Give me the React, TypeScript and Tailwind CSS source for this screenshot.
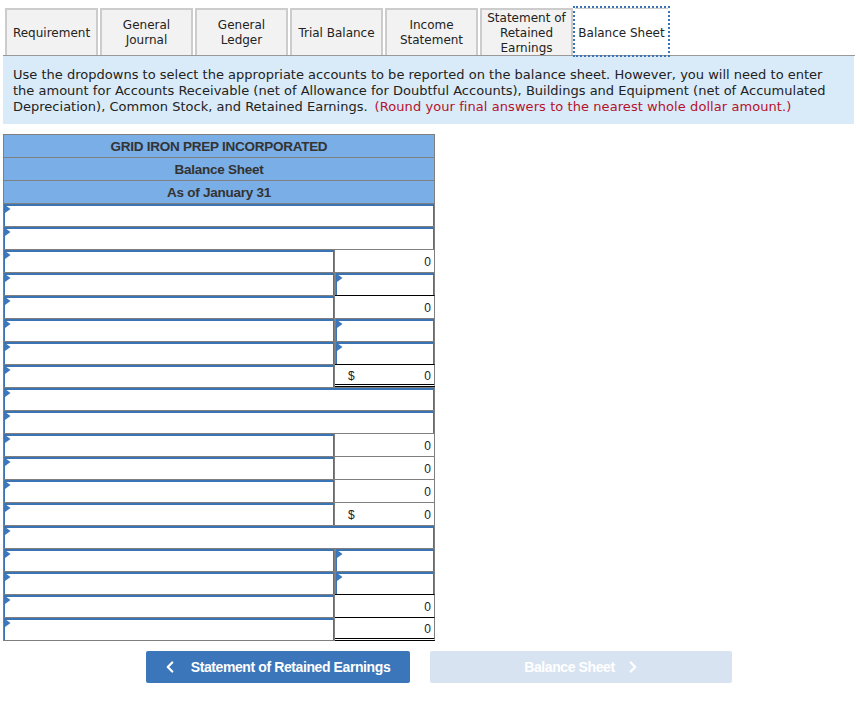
import { ChevronLeft, ChevronRight } from 'lucide-react';

const tabs = [
  { id: 'requirement', label: ['Requirement'] },
  { id: 'journal', label: ['General', 'Journal'] },
  { id: 'ledger', label: ['General', 'Ledger'] },
  { id: 'trial', label: ['Trial Balance'] },
  { id: 'income', label: ['Income', 'Statement'] },
  { id: 'retained', label: ['Statement of', 'Retained', 'Earnings'] },
  { id: 'balance', label: ['Balance Sheet'], active: true },
];

type RowType = 'full' | 'zero' | 'input' | 'total' | 'zeroRule' | 'totalPlain' | 'zeroDouble';

const rows: RowType[] = [
  'full', 'full', 'zero', 'input', 'zeroRule', 'input', 'input', 'total',
  'full', 'full', 'zero', 'zero', 'zero', 'totalPlain', 'full', 'input', 'input', 'zeroRule', 'zeroDouble',
];

function Marker() {
  return (
    <svg width="6" height="8" viewBox="0 0 6 8" className="absolute left-0 top-[-1px]">
      <path d="M0 0 L5.5 4 L0 8 Z" fill="#3b78bd" />
    </svg>
  );
}

function InputCell({ className, last }: { className: string; last?: boolean }) {
  return (
    <div
      className={`relative border-x border-t border-[#7f7f7f] bg-white ${
        last ? 'h-[24px] border-b' : 'h-[23px]'
      } ${className}`}
    >
      <div className="relative h-full border-x border-t-2 border-[#3b74b4]">
        <Marker />
      </div>
    </div>
  );
}

function ValueCell({ type }: { type: RowType }) {
  const dollar = type === 'total' || type === 'totalPlain';
  const rule =
    type === 'total' || type === 'zeroDouble' || type === 'zeroRule' ? 'border-t-black' : 'border-t-[#7f7f7f]';
  const double =
    type === 'total' || type === 'zeroDouble' ? 'border-b-[3px] border-b-black [border-bottom-style:double]' : '';
  return (
    <div
      className={`flex w-[100px] items-center justify-between border-r border-t border-r-[#7f7f7f] pl-[13px] pr-[3px] pt-[2px] text-[12px] text-[#222] ${
        type === 'zeroDouble' ? 'h-[24px]' : 'h-[23px]'
      } ${rule} ${double}`}
    >
      <span>{dollar ? '$' : ''}</span>
      <span>0</span>
    </div>
  );
}

function Row({ type }: { type: RowType }) {
  if (type === 'full') {
    return <InputCell className="w-[432px]" />;
  }
  return (
    <div className="flex">
      <InputCell className="w-[332px]" last={type === 'zeroDouble'} />
      {type === 'input' ? <InputCell className="w-[100px]" /> : <ValueCell type={type} />}
    </div>
  );
}

export default function App() {
  return (
    <div className="h-[723px] w-[867px] bg-white pl-[3px] font-['Liberation_Sans',sans-serif]">
      {/* Tabs */}
      <div className="flex h-[56px] w-[852px] gap-[2px] border-b border-[#999] pl-[2px] pt-[8px] font-['DejaVu_Sans',sans-serif] text-[12px] leading-[15px] text-[#222]">
        {tabs.map((tab) => (
          <div
            key={tab.id}
            className={
              tab.active
                ? 'flex h-[47px] w-[93px] items-center justify-center whitespace-nowrap border-t border-[#ccc] bg-white text-center outline-2 outline-dotted outline-[#3b74b4]'
                : 'flex h-[47px] w-[93px] items-center justify-center whitespace-nowrap border-2 border-b-0 border-[#ccc] bg-[#f2f2f2] text-center'
            }
          >
            <div className={tab.label.length % 2 === 1 ? 'mt-[2px]' : ''}>
              {tab.label.map((line) => (
                <div key={line}>{line}</div>
              ))}
            </div>
          </div>
        ))}
      </div>

      {/* Instructions */}
      <div className="h-[68px] w-[851px] bg-[#d9ebf9] px-[10px] pt-[11px] font-['DejaVu_Sans',sans-serif] text-[13px] leading-[16px] tracking-[0.01px] text-[#222]">
        <div>
          Use the dropdowns to select the appropriate accounts to be reported on the balance sheet. However, you will need to enter the amount for Accounts Receivable (net of Allowance for Doubtful Accounts), Buildings and Equipment (net of Accumulated
        </div>
        <div className="flex gap-[7px] whitespace-nowrap">
          <span>Depreciation), Common Stock, and Retained Earnings.</span>
          <span className="tracking-[0.07px] text-[#b5122b]">(Round your final answers to the nearest whole dollar amount.)</span>
        </div>
      </div>

      {/* Balance sheet */}
      <div className="mt-[10px] w-[432px]">
        <div className="border-x border-t border-[#7f7f7f] bg-[#7aaee6] text-center text-[13.5px] font-bold tracking-[-0.26px] text-[#333]">
          <div className="flex h-[22px] items-center justify-center pt-[2px]">GRID IRON PREP INCORPORATED</div>
          <div className="flex h-[23px] items-center justify-center border-t border-[#7f7f7f] pt-[2px]">Balance Sheet</div>
          <div className="flex h-[23px] items-center justify-center border-t border-[#7f7f7f] pt-[2px]">As of January 31</div>
        </div>
        {rows.map((type, i) => (
          <Row key={i} type={type} />
        ))}
      </div>

      {/* Navigation */}
      <div className="mt-[10px] flex gap-[20px] pl-[143px] text-[14px] font-bold tracking-[-0.4px] text-white">
        <button className="flex h-[32px] w-[264px] items-center justify-center gap-[12px] rounded-[2px] bg-[#3b76ba] pr-[5px]">
          <ChevronLeft size={18} strokeWidth={3} />
          Statement of Retained Earnings
        </button>
        <button className="flex h-[32px] w-[302px] items-center justify-center gap-[9px] rounded-[2px] bg-[#d8e3f1] pl-[4px]">
          Balance Sheet
          <ChevronRight size={18} strokeWidth={3} />
        </button>
      </div>
    </div>
  );
}
